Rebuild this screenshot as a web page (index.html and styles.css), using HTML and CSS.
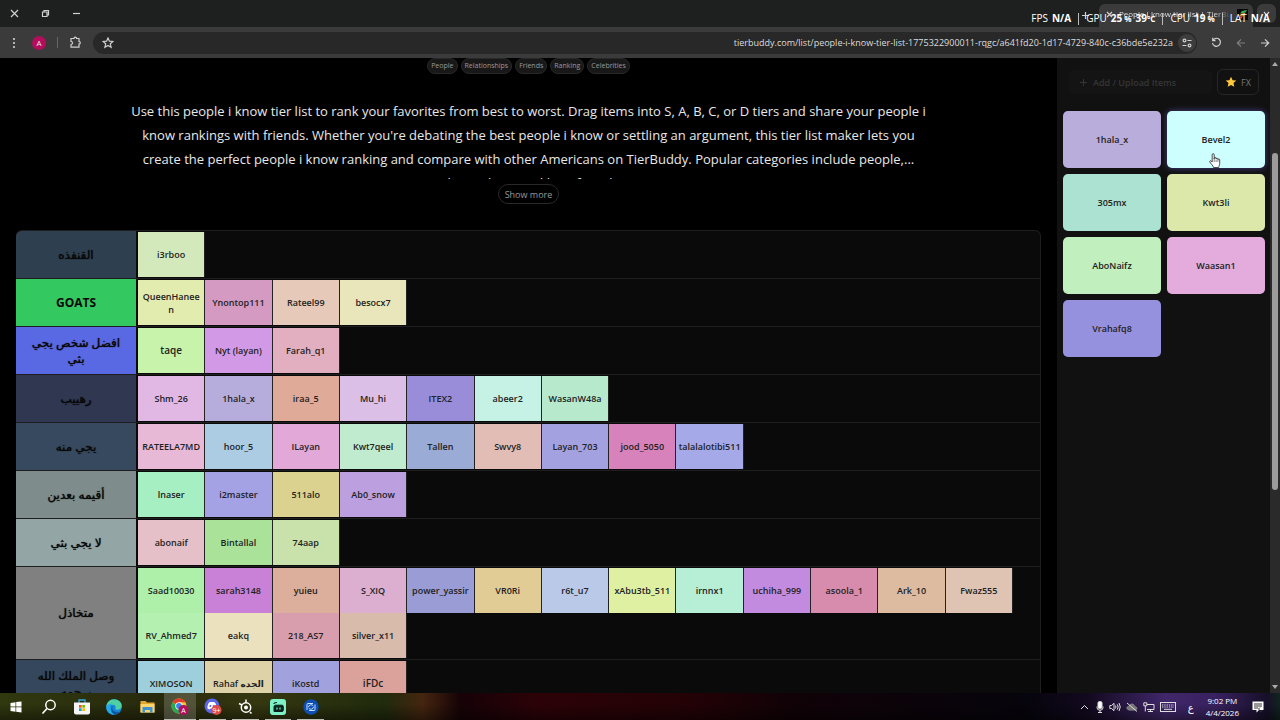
FILE: index.html
```html
<!DOCTYPE html>
<html lang="en">
<head>
<meta charset="utf-8">
<title>People I know tier list | TierBuddy</title>
<link rel="stylesheet" href="styles.css">
</head>
<body>
<div class="desktop">
  <header class="tabstrip">
    <div class="window-buttons">
      <button class="icon-btn" aria-label="Close"><svg width="9" height="9" viewBox="0 0 9 9"><path d="M1 1l7 7M8 1l-7 7"/></svg></button>
      <button class="icon-btn" aria-label="Restore"><svg width="9" height="9" viewBox="0 0 9 9"><path d="M1.5 3h4.500v4.500h-4.500zM3 3v-1.500h4.500v4.500h-1.500"/></svg></button>
      <button class="icon-btn" aria-label="Minimize"><svg width="9" height="9" viewBox="0 0 9 9"><path d="M1 4.500h7"/></svg></button>
    </div>
    <div class="tabs">
      <button class="icon-btn" aria-label="New tab"><svg width="9" height="9" viewBox="0 0 9 9"><path d="M4.500 1v7M1 4.500h7"/></svg></button>
      <div class="tab">
        <button class="icon-btn" aria-label="Close tab"><svg width="7" height="7" viewBox="0 0 7 7"><path d="M1 1l5 5M6 1l-5 5"/></svg></button>
        <span class="tab-title">People I know tier list | TierBuddy</span>
        <svg class="favicon" width="11" height="11" viewBox="0 0 11 11"><rect width="11" height="11" fill="#080808"/><path d="M3 4.500L5 2l5-1-1.500 2.500z" fill="#35b35a"/><path d="M2.500 7L4 4.800l4.500-1L7 6.500z" fill="#e8a52e"/><path d="M2 9.500L3 7.500l3-.5-1.500 2.500z" fill="#df5034"/></svg>
      </div>
      <button class="icon-btn tab-search" aria-label="Search tabs"><svg width="9" height="9" viewBox="0 0 9 9"><path d="M2 3l2.500 3L7 3"/></svg></button>
    </div>
    <div class="stats">
      <span>FPS</span><b>N/A</b><i></i><span>GPU</span><b>25<small> %</small></b><b>39<small>°C</small></b><i></i><span>CPU</span><b>19<small> %</small></b><i></i><span>LAT</span><b>N/A</b>
    </div>
  </header>

  <nav class="toolbar">
    <button class="icon-btn" aria-label="Menu"><svg width="4" height="12" viewBox="0 0 4 12"><g fill="#d0d0d0" stroke="none"><circle cx="2" cy="2" r="1.100"/><circle cx="2" cy="6" r="1.100"/><circle cx="2" cy="10" r="1.100"/></g></svg></button>
    <button class="avatar" aria-label="Profile">A</button>
    <span class="divider"></span>
    <button class="icon-btn" aria-label="Extensions"><svg width="13" height="13" viewBox="0 0 13 13"><path d="M2 2.500h3a1.300 1.300 0 0 1 2.600 0h2.400v3a1.300 1.300 0 0 1 0 2.600v3.100H2V8.500a1.500 1.500 0 0 0 0-3z"/></svg></button>
    <div class="address">
      <button class="icon-btn" aria-label="Bookmark"><svg width="12" height="12" viewBox="0 0 12 12"><path d="M6 1l1.400 3.200 3.500.3-2.600 2.300.8 3.400L6 8.400l-3.100 1.800.8-3.400L1.100 4.500l3.500-.3z"/></svg></button>
      <input class="url" type="text" aria-label="Address" value="tierbuddy.com/list/people-i-know-tier-list-1775322900011-rqgc/a641fd20-1d17-4729-840c-c36bde5e232a">
      <button class="icon-btn site" aria-label="Site information"><svg width="10" height="10" viewBox="0 0 10 10"><path d="M5.500 2.500h4M.5 7.500h4"/><circle cx="2.500" cy="2.500" r="1.400"/><circle cx="7.500" cy="7.500" r="1.400"/></svg></button>
    </div>
    <button class="icon-btn" aria-label="Reload"><svg width="11" height="11" viewBox="0 0 11 11"><path d="M2 3.200A4 4 0 1 1 1.500 6M1.700.8v2.800h2.800"/></svg></button>
    <button class="icon-btn dim" aria-label="Forward"><svg width="10" height="10" viewBox="0 0 10 10"><path d="M9 5H1.500M5 1.300L1.300 5 5 8.700"/></svg></button>
    <button class="icon-btn" aria-label="Back"><svg width="10" height="10" viewBox="0 0 10 10"><path d="M1 5h7.500M5 1.300L8.700 5 5 8.700"/></svg></button>
  </nav>

  <div class="page">
    <main class="main">
      <div class="tags"><span>People</span><span>Relationships</span><span>Friends</span><span>Ranking</span><span>Celebrities</span></div>
      <p class="intro">Use this people i know tier list to rank your favorites from best to worst. Drag items into S, A, B, C, or D tiers and share your people i<br>know rankings with friends. Whether you're debating the best people i know or settling an argument, this tier list maker lets you<br>create the perfect people i know ranking and compare with other Americans on TierBuddy. Popular categories include people,...<br>relationships, and best friends.</p>
      <button class="more">Show more</button>

      <div class="board">
        <section class="tier"><h2 class="label" style="background:#2e3f50" dir="rtl">القنفذه</h2><div class="items">
          <div class="item" style="background:#d3e8bb">i3rboo</div>
        </div></section>
        <section class="tier"><h2 class="label" style="background:#34c860">GOATS</h2><div class="items">
          <div class="item" style="background:#e2ecae">QueenHanee<br>n</div><div class="item" style="background:#d49ac2">Ynontop111</div><div class="item" style="background:#e7c9ba">Rateel99</div><div class="item" style="background:#eae6bb">besocx7</div>
        </div></section>
        <section class="tier"><h2 class="label" style="background:#5968e3" dir="rtl">افضل شخص يجي بثي</h2><div class="items">
          <div class="item big" style="background:#c7f3ab">taqe</div><div class="item" style="background:#d29ae6">Nyt (layan)</div><div class="item" style="background:#e2afc1">Farah_q1</div>
        </div></section>
        <section class="tier"><h2 class="label" style="background:#2f3751" dir="rtl">رهييب</h2><div class="items">
          <div class="item" style="background:#e1b7e4">Shm_26</div><div class="item" style="background:#b7addd">1hala_x</div><div class="item" style="background:#dfaa98">iraa_5</div><div class="item" style="background:#dcbfe7">Mu_hi</div><div class="item" style="background:#998dda">ITEX2</div><div class="item" style="background:#c6f2e6">abeer2</div><div class="item" style="background:#b7eacd">WasanW48a</div>
        </div></section>
        <section class="tier"><h2 class="label" style="background:#36495e" dir="rtl">يجي منه</h2><div class="items">
          <div class="item" style="background:#e7b9d6">RATEELA7MD</div><div class="item" style="background:#abcce3">hoor_5</div><div class="item" style="background:#e2a9d8">ILayan</div><div class="item" style="background:#c1ebce">Kwt7qeel</div><div class="item" style="background:#9aabd6">Tallen</div><div class="item" style="background:#e1bdb6">Swvy8</div><div class="item" style="background:#a3a1df">Layan_703</div><div class="item" style="background:#d782ba">jood_5050</div><div class="item" style="background:#a5a9e8">talalalotibi511</div>
        </div></section>
        <section class="tier"><h2 class="label" style="background:#7e8c8c" dir="rtl">أقيمه بعدين</h2><div class="items">
          <div class="item" style="background:#a5efc3">lnaser</div><div class="item" style="background:#a4a1e5">i2master</div><div class="item" style="background:#dcd28f">511alo</div><div class="item" style="background:#bb9fde">Ab0_snow</div>
        </div></section>
        <section class="tier"><h2 class="label" style="background:#94a5a5" dir="rtl">لا يجي بثي</h2><div class="items">
          <div class="item" style="background:#e6c0c8">abonaif</div><div class="item" style="background:#a9e298">Bintallal</div><div class="item" style="background:#c9e2ac">74aap</div>
        </div></section>
        <section class="tier"><h2 class="label" style="background:#808080" dir="rtl">متخاذل</h2><div class="items">
          <div class="item" style="background:#aef0aa">Saad10030</div><div class="item" style="background:#c881d6">sarah3148</div><div class="item" style="background:#dcae9c">yuieu</div><div class="item" style="background:#dcafd1">S_XIQ</div><div class="item" style="background:#9a9cd5">power_yassir</div><div class="item" style="background:#e2cc95">VR0Ri</div><div class="item" style="background:#bac9e7">r6t_u7</div><div class="item" style="background:#e0f0a3">xAbu3tb_511</div><div class="item" style="background:#b7eed6">irnnx1</div><div class="item" style="background:#c28bdf">uchiha_999</div><div class="item" style="background:#d88cad">asoola_1</div><div class="item" style="background:#dcbba1">Ark_10</div><div class="item" style="background:#e0c4b3">Fwaz555</div><div class="item" style="background:#b4f1b0">RV_Ahmed7</div><div class="item" style="background:#ebe1bf">eakq</div><div class="item" style="background:#d99eae">218_AS7</div><div class="item" style="background:#d9bbab">silver_x11</div>
        </div></section>
        <section class="tier"><h2 class="label" style="background:#35475d" dir="rtl">وصل الملك الله يرحمه</h2><div class="items">
          <div class="item" style="background:#9dcfdc">XIMOSON</div><div class="item" style="background:#ded2a8">Rahaf الجده</div><div class="item" style="background:#a1a1dd">iKostd</div><div class="item big" style="background:#dba19b">iFDc</div>
        </div></section>
      </div>
    </main>

    <aside class="sidebar">
      <div class="actions">
        <button class="add"><svg width="9" height="9" viewBox="0 0 9 9"><path d="M4.500 1v7M1 4.500h7"/></svg>Add / Upload Items</button>
        <button class="fx"><svg width="12" height="12" viewBox="0 0 12 12"><path d="M6 .8l1.600 3.400 3.700.4-2.800 2.500.8 3.700L6 9 2.700 10.800l.8-3.700L.7 4.600l3.700-.4z" fill="#ffc83d"/></svg>FX</button>
      </div>
      <div class="pool">
        <div class="card" style="background:#b9addc">1hala_x</div>
        <div class="card hovered" style="background:#ccfffd">Bevel2
          <svg class="pointer" width="12" height="15" viewBox="0 0 12 15"><path d="M3.200 9V1.700a1 1 0 0 1 2 0V6l.1-.8a.9.900 0 0 1 1.800.3v.5a.9.900 0 0 1 1.800.2v.5a.9.900 0 0 1 1.800.3v3.500c0 2-1 2.500-1 4H4.500c-.3-2-3-4-3.700-5.700-.3-1 .8-1.500 1.500-.7z" fill="#fff" stroke="#222" stroke-width=".8"/><path d="M5.200 6v3M7.100 6.500V9M8.900 7v2" stroke="#333" stroke-width=".6"/></svg>
        </div>
        <div class="card" style="background:#abe2d1">305mx</div>
        <div class="card" style="background:#dce8aa">Kwt3li</div>
        <div class="card" style="background:#c1efbd">AboNaifz</div>
        <div class="card" style="background:#e3acdd">Waasan1</div>
        <div class="card" style="background:#9691de">Vrahafq8</div>
      </div>
    </aside>
    <div class="scrollbar"><i class="up"></i><i class="thumb"></i><i class="down"></i></div>
  </div>

  <footer class="taskbar">
    <div class="apps">
      <button aria-label="Start"><svg width="12" height="12" viewBox="0 0 12 12"><path d="M.5 2L5.500 1.200V5.600H.5zM6.200 1.100L11.500.4v5.200H6.200zM.5 6.300h5v4.400l-5-.8zM6.200 6.300h5.300v5.200l-5.300-.7z" fill="#fff"/></svg></button>
      <button aria-label="Search"><svg width="16" height="16" viewBox="0 0 16 16"><circle cx="9.500" cy="6" r="4.700" fill="none" stroke="#fff" stroke-width="1.500"/><path d="M6 9.500L1.500 14.500" stroke="#fff" stroke-width="1.600"/></svg></button>
      <button aria-label="Store"><svg width="16" height="16" viewBox="0 0 16 16"><path d="M5 4V1h6v3" fill="none" stroke="#35a6df" stroke-width="1.300"/><path d="M0 3.500h16v10a2 2 0 0 1-2 2H2a2 2 0 0 1-2-2z" fill="#f4f4f4"/><path d="M5 6h2.700v2.700H5z" fill="#f25022"/><path d="M8.300 6H11v2.700H8.300z" fill="#7fba00"/><path d="M5 9.300h2.700V12H5z" fill="#00a4ef"/><path d="M8.300 9.300H11V12H8.300z" fill="#ffb900"/></svg></button>
      <button aria-label="Edge"><svg width="16" height="16" viewBox="0 0 16 16"><circle cx="8" cy="8" r="7.800" fill="#1684d8"/><path d="M.3 8C.5 3.500 4 .2 8 .2c4.500 0 7.800 3 7.800 6.500 0 2.500-2 4-4.500 4-1.800 0-2.300-.8-1.800-1.700.7-1.500-.5-3.300-3-3.300C3.500 5.700 1 7 .3 8z" fill="#4fd0a4"/><path d="M.3 8c1-2.500 3.700-3.500 6-3.200C3.500 6 3.500 12 8.500 15.600 3.500 16 .2 12.500.3 8z" fill="#23a9e8"/><path d="M6.500 7.500c-1.500 4 3 7 7.500 5.200-1.500 2-3.500 2.800-5.500 3C4.500 13 4.500 8.500 6.500 7.500z" fill="#0d559f"/></svg></button>
      <button aria-label="File Explorer"><svg width="15" height="13" viewBox="0 0 15 13"><path d="M.5 1h5l1.500 1.500h7.500v10H.5z" fill="#e0a72d"/><path d="M.5 4h14v8.500H.5z" fill="#f9d66b"/><path d="M2.500 7h10v5.500h-2.500V10h-5v2.500H2.500z" fill="#3d91cf"/></svg></button>
      <button class="running active" aria-label="Chrome"><svg width="18" height="18" viewBox="0 0 18 18"><circle cx="8" cy="8" r="7.500" fill="#f5c330"/><path d="M8 8L1.500 4.300A7.500 7.500 0 0 1 14.500 4.300H8z" fill="#e33b2e"/><path d="M1.500 4.300A7.500 7.500 0 0 0 8 15.500l2.500-5z" fill="#2aa850"/><circle cx="8" cy="8" r="3.700" fill="#fff"/><circle cx="8" cy="8" r="2.900" fill="#3b7fe8"/><circle cx="12.500" cy="12" r="5" fill="#b30d5c"/><text x="12.500" y="14.500" class="badge-text">A</text></svg></button>
      <button class="running" aria-label="Discord"><svg width="18" height="18" viewBox="0 0 18 18"><circle cx="8" cy="8" r="7.500" fill="#5b67e8"/><path d="M5 4.500l1.500-.5h3l1.500.5c1.300 2 1.700 4 1.500 6l-2 1-1-1h-3l-1 1-2-1c-.2-2 .2-4 1.500-6z" fill="#fff"/><circle cx="6.300" cy="8" r="1" fill="#5b67e8"/><circle cx="9.700" cy="8" r="1" fill="#5b67e8"/><circle cx="12.500" cy="12" r="5" fill="#de4b48"/><text x="12.500" y="14.500" class="badge-text">9+</text></svg></button>
      <button class="running" aria-label="SteelSeries GG"><svg width="15" height="15" viewBox="0 0 15 15"><g fill="none" stroke="#fff" stroke-width="1.500"><circle cx="8" cy="8.500" r="4.700"/><path d="M8 .5v3.500M1 4.500l3 1.500M12 13l1.500 1.500"/></g><circle cx="8" cy="8.500" r="2" fill="#fff"/></svg></button>
      <button class="running" aria-label="Streaming"><svg width="16" height="16" viewBox="0 0 16 16"><rect width="16" height="16" rx="3" fill="#7cf2c6"/><path d="M3.500 5C4 4 5 3.500 7 3.500M4 12.500V7.800c0-1 .6-1.600 1.600-1.600H12c.8 0 1.300.5 1.300 1.300v3.700c0 .8-.5 1.300-1.300 1.300z" fill="#08231d" stroke="#08231d"/><path d="M7 8.500v2M10 8.500v2" stroke="#7cf2c6" stroke-width="1.200"/></svg></button>
      <button class="running" aria-label="Camera"><svg width="16" height="16" viewBox="0 0 16 16"><circle cx="8" cy="8" r="7.700" fill="#0d4fb5"/><g fill="none" stroke="#c9e0ff" stroke-width="1"><path d="M4 11V5.500q0-1 1-1h5M12 5.500v5q0 1-1 1H6M5.500 8a2.600 2.600 0 0 1 4.800-1M10.500 8a2.600 2.600 0 0 1-4.800 1"/></g></svg></button>
    </div>
    <div class="tray">
      <svg class="expand" width="9" height="6" viewBox="0 0 9 6"><path d="M1 5l3.500-3.500L8 5"/></svg>
      <svg width="8" height="12" viewBox="0 0 8 12"><rect x="2" y=".5" width="4" height="7" rx="1.500" fill="#fff"/><path d="M1 5.500v1.200a3 2.500 0 0 0 6 0V5.500M4 9v2.500M2 11.500h4"/></svg>
      <svg width="12" height="10" viewBox="0 0 12 10"><path d="M.8 3.500h1.700L5 1.300v7.400L2.500 6.500H.8zM6.500 3.500q1 1.500 0 3M8.200 2.300q2 2.700 0 5.400M10 1q2.500 4 0 8"/></svg>
      <svg width="12" height="10" viewBox="0 0 12 10"><path d="M2 7.500C0 6.500 1 4 3 4.500 4 1 8.500 1.500 8.500 4.500c3 0 3 3.500.5 3.500H3z" fill="#777" stroke="#888"/><path d="M1 1l10 8.500"/></svg>
      <svg width="12" height="10" viewBox="0 0 12 10"><path d="M4 2.500h7v5H4M7.500 7.500v2M5 9.500h5M.8.800h3v3h-3zM2.300 4v5.500"/></svg>
      <svg width="16" height="10" viewBox="0 0 16 10"><rect x=".5" y=".5" width="15" height="9"/><path d="M2 3h12M2 5h12" stroke-dasharray="1.300 1"/><path d="M4 7.300h8"/></svg>
      <span class="lang">ع</span>
      <div class="clock"><time>9:02 PM</time><time>4/4/2026</time></div>
      <svg width="12" height="12" viewBox="0 0 12 12"><path d="M.5.500h11v8.500H7L4.500 11.500V9h-4z" fill="#fff" stroke="none"/><path d="M2 3h8M2 5h8M2 7h4" stroke="#333"/><path d="M8 6.500a2 2 0 1 0 2.500 3" stroke="#333"/></svg>
    </div>
  </footer>
</div>
</body>
</html>
```

FILE: styles.css
```css
* { box-sizing: border-box; }
body { margin: 0; background: #000; font-family: "Open Sans", "Noto Sans", "DejaVu Sans", sans-serif; color: #e8e8e8; }
button { padding: 0; border: 0; background: none; color: inherit; font: inherit; }
svg { display: block; flex: none; }

.desktop { display: flex; flex-direction: column; height: 100vh; overflow: hidden; }

.tabstrip { position: relative; flex: none; display: flex; justify-content: space-between; height: 27px; background: #1e201f; }
.icon-btn { display: flex; align-items: center; justify-content: center; flex: none; }
.icon-btn svg { fill: none; stroke: #d0d0d0; stroke-width: 1.2; }
.window-buttons { display: flex; align-items: center; gap: 22px; padding-left: 10px; }
.tabs { display: flex; align-items: center; gap: 4px; padding: 4px 4px 0 0; }
.tabs > .icon-btn:first-child { margin-right: 5px; }
.tab { display: flex; align-items: center; gap: 6px; width: 154px; height: 23px; padding: 0 5px 3px 7px; border-radius: 6px 6px 0 0; background: #3b3b3b; }
.tab-title { flex: 1; overflow: hidden; white-space: nowrap; font-size: 8px; line-height: 14px; color: #ddd; mask-image: linear-gradient(to right, #000 85%, transparent); }
.tab-search { align-self: flex-start; width: 19px; height: 19px; border-radius: 6px; background: #3b3b3b; }
.stats { position: absolute; top: 11px; right: 10px; display: flex; align-items: center; gap: 4px; font-size: 10px; line-height: 15px; color: #fff; }
.stats b { font-weight: 700; }
.stats small { font-size: 8px; }
.stats i { width: 1px; height: 12px; margin: 0 3px; background: #bbb; }

.toolbar { flex: none; display: flex; align-items: center; gap: 14px; height: 31px; padding: 0 10px 0 12px; background: #3b3b3b; }
.avatar { width: 14px; height: 14px; margin-left: 2px; border-radius: 50%; background: #b30d5c; font-size: 8px; line-height: 14px; text-align: center; }
.divider { width: 1px; height: 11px; margin: 0 -3px; background: #666; }
.toolbar > .divider + .icon-btn { margin-right: -3px; }
.address { flex: 1; min-width: 0; display: flex; align-items: center; gap: 3px; height: 22px; padding: 0 1px 0 9px; border-radius: 11px; background: #282828; }
.url { flex: 1; min-width: 0; border: 0; background: none; color: #ddd; font: 9px/16px "Open Sans", sans-serif; text-align: right; outline: 0; }
.site { width: 18px; height: 18px; border-radius: 50%; background: #3d3d3d; }
.dim { opacity: .45; }

.page { flex: 1; min-height: 0; display: flex; overflow: hidden; }
.main { flex: 1; min-width: 0; display: flex; flex-direction: column; align-items: center; padding: 0 16px; background: #000; }
.tags { flex: none; display: flex; gap: 3px; }
.tags span { padding: 0 3px; border: 1px solid #292929; border-radius: 8px; background: #181818; font-size: 7px; line-height: 14px; color: #999; }
.intro { flex: none; height: 80px; margin: 25px 0 5px; overflow: hidden; font-size: 13px; line-height: 24px; text-align: center; white-space: nowrap; }
.more { flex: none; height: 20px; padding: 0 6px; border: 1px solid #292929; border-radius: 10px; font-size: 9px; color: #999; }

.board { flex: none; align-self: stretch; margin-top: 26px; border: 1px solid #1f1f1f; border-left: 0; border-radius: 6px; overflow: hidden; background: #0a0a0a; }
.tier { display: flex; min-height: 48px; border-bottom: 1px solid #1e1e1e; }
.label { flex: none; display: flex; align-items: center; justify-content: center; width: 120px; margin: 0; padding: 0 12px; overflow: hidden; font-size: 12px; font-weight: 700; line-height: 16px; text-align: center; color: #080808; }
.label[dir="rtl"] { font-weight: 500; text-shadow: 0 0 1px #080808; }
.tier:last-child .label { height: 47px; }
.items { flex: 1; display: grid; grid-template-columns: repeat(13, 1fr); grid-auto-rows: 45px; padding: 1px 27px 1px 2px; }
.item { display: flex; align-items: center; justify-content: center; min-width: 0; padding: 0 1px; border-right: 1px solid #222; font-size: 9px; font-weight: 600; line-height: 13px; text-align: center; color: #222; }
.big { font-size: 10px; }

.sidebar { flex: none; width: 213px; padding: 11px 5px 0 6px; background: #111; }
.actions { display: flex; align-items: center; gap: 5px; padding: 0 6px; }
.add { flex: 1; display: flex; align-items: center; gap: 5px; height: 24px; padding: 0 10px; border-radius: 5px; background: #141414; font-size: 9px; font-weight: 600; color: #363636; white-space: nowrap; }
.add svg { fill: none; stroke: #363636; }
.fx { display: flex; align-items: center; justify-content: center; gap: 4px; width: 42px; height: 26px; border: 1px solid #262626; border-radius: 6px; font-size: 9px; color: #777; }
.pool { display: grid; grid-template-columns: 1fr 1fr; grid-auto-rows: 57px; gap: 6px; margin-top: 16px; }
.card { position: relative; display: flex; align-items: center; justify-content: center; border-radius: 5px; padding-bottom: 1px; font-size: 9px; font-weight: 600; color: #222; }
.hovered { box-shadow: 0 0 6px #47418a; }
.pointer { position: absolute; left: 42px; top: 42px; }

.scrollbar { flex: none; position: relative; display: flex; flex-direction: column; align-items: center; justify-content: space-between; width: 10px; padding: 4px 0; background: #2a2a2a; }
.up, .down { border: 3px solid transparent; }
.up { border-top: 0; border-bottom: 4px solid #aaa; }
.down { border-bottom: 0; border-top: 4px solid #aaa; }
.thumb { position: absolute; left: 2px; top: 15%; width: 6px; height: 53%; border-radius: 3px; background: #9c9c9c; }

.taskbar { flex: none; display: flex; justify-content: space-between; height: 27px; background: linear-gradient(to bottom, transparent 40%, #0006), linear-gradient(to right, #30380f 0, #282a0d 12%, #353710 20%, #202b0d 30%, #45250f 33%, #160207 36%, #2c0207 42%, #230206 54%, #100207 62%, #06040c 80%, #12091f 85%, #40276a 91%, #38215f 95%, #160f29 99%, #10251d); }
.apps { display: flex; width: 327px; }
.apps button { flex: 1; display: flex; align-items: center; justify-content: center; }
.running { position: relative; }
.running::after { content: ""; position: absolute; left: 3px; right: 3px; bottom: 0; height: 1px; background: #bdbdb5; }
.active { background: #ffffff2e; }
.active::after { left: 0; right: 0; }
.badge-text { fill: #fff; font-size: 7px; text-anchor: middle; }
.tray { display: flex; align-items: center; gap: 5px; padding-right: 16px; color: #fff; }
.tray svg { fill: none; stroke: #ddd; }
.tray .expand { margin-right: 2px; }
.lang { padding: 0 7px; font-size: 10px; }
.clock { display: flex; flex-direction: column; margin-right: 8px; font-size: 8px; line-height: 12px; text-align: center; }
```
